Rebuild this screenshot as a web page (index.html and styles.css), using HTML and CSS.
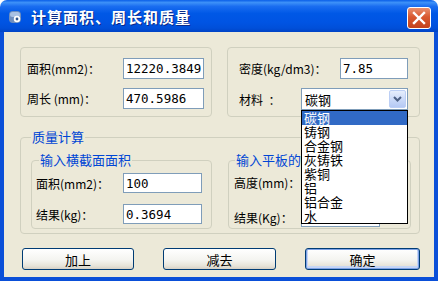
FILE: index.html
```html
<!DOCTYPE html>
<html>
<head>
    <meta charset="utf-8">
    <title>计算面积、周长和质量</title>
<link rel="stylesheet" href="styles.css">
</head>
<body>
<div class="window">
    <div class="titlebar">
        <svg class="app-icon" width="15" height="15" viewBox="0 0 15 15">
            <rect x="1" y="2" width="12" height="12" rx="4" fill="#6f8fbf"/>
            <rect x="2" y="3" width="10" height="5" rx="2.5" fill="#a9c1e3"/>
            <circle cx="9" cy="10" r="3.2" fill="#fff"/>
            <circle cx="9" cy="10" r="1.4" fill="#2f568f"/>
        </svg>
        <span class="title">计算面积、周长和质量</span>
        <span class="close">
            <svg width="14" height="14" viewBox="0 0 14 14">
                <path d="M2 2 L12 12 M12 2 L2 12" stroke="#fff" stroke-width="2.4" stroke-linecap="square"/>
            </svg>
        </span>
    </div>

    <div class="body">
        <div class="top-row">
            <div class="group group-size">
                <div class="row">
                    <label>面积(mm2)：</label>
                    <input class="num w81" type="text" value="12220.3849">
                </div>
                <div class="row">
                    <label>周长 (mm)：</label>
                    <input class="num w81" type="text" value="470.5986">
                </div>
            </div>
            <div class="group group-material">
                <div class="row">
                    <label>密度(kg/dm3)：</label>
                    <input class="num w68" type="text" value="7.85">
                </div>
                <div class="row row-combo">
                    <label class="pre">材料  ：</label>
                    <div class="combo">
                        <span class="combo-text">碳钢</span>
                        <span class="combo-btn">
                            <svg width="9" height="6" viewBox="0 0 9 6">
                                <path d="M1 1 L4.5 4.5 L8 1" fill="none" stroke="#4d6185" stroke-width="2"/>
                            </svg>
                        </span>
                        <ul class="combo-list">
                            <li class="selected">碳钢</li>
                            <li>铸钢</li>
                            <li>合金钢</li>
                            <li>灰铸铁</li>
                            <li>紫铜</li>
                            <li>铝</li>
                            <li>铝合金</li>
                            <li>水</li>
                        </ul>
                    </div>
                </div>
            </div>
        </div>

        <fieldset class="mass">
            <legend>质量计算</legend>
            <div class="mass-row">
                <fieldset class="sub sub-left">
                    <legend>输入横截面面积</legend>
                    <div class="sub-row">
                        <label>面积(mm2)：</label>
                        <input class="num w79" type="text" value="100">
                    </div>
                    <div class="sub-row">
                        <label>结果(kg)：</label>
                        <input class="num w79" type="text" value="0.3694">
                    </div>
                </fieldset>
                <fieldset class="sub sub-right">
                    <legend>输入平板的面积</legend>
                    <div class="sub-row">
                        <label>高度(mm)：</label>
                        <input class="num w79" type="text" value="10">
                    </div>
                    <div class="sub-row">
                        <label>结果(Kg)：</label>
                        <input class="num w79" type="text" value="">
                    </div>
                </fieldset>
            </div>
        </fieldset>

        <div class="buttons">
            <button class="btn btn-add">加上</button>
            <button class="btn btn-sub">减去</button>
            <button class="btn btn-ok">确定</button>
        </div>
    </div>
</div>
</body>
</html>
```

FILE: styles.css
```css
*
{
  box-sizing: border-box;
}

html, body
{
  margin: 0;
  padding: 0;
  background: #fff;
}

body
{
  font-family: "Noto Sans CJK SC", "Liberation Sans", sans-serif;
  color: #000;
}

div.window
{
  width: 438px;
  height: 281px;
  display: flex;
  flex-direction: column;
}

/* title bar */
div.titlebar
{
  height: 32px;
  display: flex;
  align-items: center;
  padding: 0 7px 0 8px;
  border-radius: 7px 7px 0 0;
  background: linear-gradient(to bottom, #0a5fe8 0%, #3d91f8 8%, #1a6df0 20%, #0058e6 42%, #0054e3 70%, #004fd9 88%, #0043c5 100%);
}

.app-icon
{
  flex: none;
  margin-right: 8px;
}

span.title
{
  color: #fff;
  font-size: 15px;
  font-weight: bold;
  letter-spacing: 1px;
  text-shadow: 1px 1px 0 #0a2a8a;
}

span.close
{
  margin-left: auto;
  align-self: flex-start;
  margin-top: 7px;
  width: 24px;
  height: 22px;
  display: flex;
  align-items: center;
  justify-content: center;
  border: 1px solid #fff;
  border-radius: 3px;
  background: linear-gradient(to bottom, #e9906f 0%, #d9582f 45%, #c3421c 100%);
}

/* dialog body */
div.body
{
  flex: 1;
  background: #ece9d8;
  border: 4px solid #0a4fd8;
  border-top: 0;
  padding: 15px 14px 0 16px;
}

div.top-row
{
  display: flex;
  gap: 15px;
}

div.group
{
  height: 70px;
  border: 1px solid #d0d0bf;
  border-radius: 4px;
  display: flex;
  flex-direction: column;
  gap: 9px;
}

div.group-size
{
  width: 192px;
  padding: 10px 7px 0 6px;
}

div.group-material
{
  width: 193px;
  padding: 10px 11px 0 11px;
}

div.row
{
  display: flex;
  align-items: center;
  justify-content: space-between;
  height: 21px;
}

div.row-combo
{
  height: 22px;
}

label
{
  font-size: 12px;
  white-space: pre;
}

input.num
{
  height: 21px;
  border: 1px solid #7f9db9;
  background: #fff;
  padding: 0 2px;
  margin: 0;
  font-family: "DejaVu Sans Mono", monospace;
  font-size: 12.5px;
  color: #000;
  outline: none;
}

.w81 { width: 81px; }
.w68 { width: 68px; }
.w79 { width: 79px; height: 20px !important; }

/* combo box */
div.combo
{
  position: relative;
  width: 107px;
  height: 22px;
  border: 1px solid #7f9db9;
  background: #fff;
  display: flex;
  align-items: center;
}

span.combo-text
{
  font-size: 13px;
  padding-left: 3px;
}

span.combo-btn
{
  margin-left: auto;
  margin-right: 1px;
  width: 17px;
  height: 18px;
  border-radius: 2px;
  border: 1px solid #bccff5;
  background: linear-gradient(to bottom, #e6eefc 0%, #c7d7f8 60%, #b5c9f4 100%);
  display: flex;
  align-items: center;
  justify-content: center;
}

ul.combo-list
{
  position: absolute;
  top: 100%;
  left: -1px;
  width: 107px;
  margin: 1px 0 0 0;
  padding: 0;
  list-style: none;
  background: #fff;
  border: 1px solid #000;
  z-index: 10;
}

ul.combo-list li
{
  height: 14px;
  line-height: 14px;
  font-size: 13px;
  padding: 0 2px;
}

ul.combo-list li.selected
{
  background: #316ac5;
  color: #fff;
}

/* mass group */
fieldset
{
  margin: 0;
  min-width: 0;
  border: 1px solid #d0d0bf;
  border-radius: 4px;
}

legend
{
  color: #0046d5;
  font-size: 13px;
  line-height: 16px;
  padding: 0 1px;
}

fieldset.mass
{
  width: 400px;
  margin-top: 12px;
  padding: 7px 0 4px 10px;
}

div.mass-row
{
  display: flex;
  gap: 16px;
}

fieldset.sub-left
{
  width: 181px;
  padding: 5px 0 4px 4px;
}

fieldset.sub-left legend
{
  margin-left: 3px;
}

fieldset.sub-right
{
  width: 183px;
  padding: 4px 0 1px 5px;
}

fieldset.sub-right legend
{
  margin-left: 1px;
}

div.sub-row
{
  display: flex;
  align-items: center;
  height: 20px;
}

fieldset.sub-left div.sub-row + div.sub-row
{
  margin-top: 11px;
}

fieldset.sub-right div.sub-row + div.sub-row
{
  margin-top: 15px;
}

fieldset.sub-left label
{
  width: 87px;
}

fieldset.sub-right label
{
  width: 67px;
}

/* buttons */
div.buttons
{
  display: flex;
  gap: 29px;
  margin-top: 14px;
  padding-left: 2px;
}

button.btn
{
  height: 22px;
  border: 1px solid #003c74;
  border-radius: 3px;
  background: linear-gradient(to bottom, #ffffff 0%, #f4f4f0 55%, #e6e3d8 85%, #d6d0c5 100%);
  font-family: "Noto Sans CJK SC", sans-serif;
  font-size: 13px;
  padding: 0;
  color: #000;
}

button.btn-add { width: 112px; }
button.btn-sub { width: 113px; }

button.btn-ok
{
  width: 115px;
  box-shadow: inset 0 0 0 1px #7ea2e6, inset 0 -1px 0 2px #c6d6f5;
}
```
